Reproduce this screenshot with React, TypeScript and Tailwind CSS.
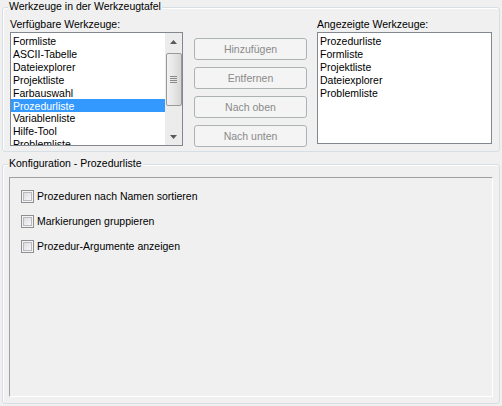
import React from 'react';

const available = [
  'Formliste',
  'ASCII-Tabelle',
  'Dateiexplorer',
  'Projektliste',
  'Farbauswahl',
  'Prozedurliste',
  'Variablenliste',
  'Hilfe-Tool',
  'Problemliste',
];

const shown = ['Prozedurliste', 'Formliste', 'Projektliste', 'Dateiexplorer', 'Problemliste'];

const buttons = ['Hinzufügen', 'Entfernen', 'Nach oben', 'Nach unten'];

const options = [
  'Prozeduren nach Namen sortieren',
  'Markierungen gruppieren',
  'Prozedur-Argumente anzeigen',
];

/** Win7 style vertical scrollbar, drawn at its fixed look. */
function ScrollBar() {
  return (
    <div className="flex w-[17px] shrink-0 flex-col items-center bg-[#ececec]">
      <div className="flex h-[17px] w-full items-center justify-center">
        <svg width="7" height="4" viewBox="0 0 7 4">
          <path d="M0 4 L3.5 0 L7 4 Z" fill="#5a5a5a" />
        </svg>
      </div>
      <div className="mt-[3px] flex h-[53px] w-[16px] items-center justify-center rounded-[2px] border border-[#9a9a9a] bg-gradient-to-r from-[#f2f2f2] via-[#e6e6e6] to-[#d6d6d6]">
        <div className="flex flex-col gap-[1px]">
          <div className="h-[1px] w-[7px] bg-[#8a8a8a]" />
          <div className="h-[1px] w-[7px] bg-[#8a8a8a]" />
          <div className="h-[1px] w-[7px] bg-[#8a8a8a]" />
          <div className="h-[1px] w-[7px] bg-[#8a8a8a]" />
        </div>
      </div>
      <div className="flex-1" />
      <div className="flex h-[17px] w-full items-center justify-center">
        <svg width="7" height="4" viewBox="0 0 7 4">
          <path d="M0 0 L3.5 4 L7 0 Z" fill="#5a5a5a" />
        </svg>
      </div>
    </div>
  );
}

function CheckBox({ label }: { label: string }) {
  return (
    <div className="flex h-[13px] items-center gap-[3px]">
      <div className="h-[13px] w-[13px] border border-[#8f8f8f] bg-[#f4f4f4] p-[1px]">
        <div className="h-full w-full border border-[#b6bac0] bg-gradient-to-br from-[#dcdcdc] to-[#f8f8f8]" />
      </div>
      <span className="leading-[13px]">{label}</span>
    </div>
  );
}

export default function App() {
  return (
    <div
      className="h-[406px] w-[502px] overflow-hidden bg-[#f0f0f0] text-[10.5px] leading-[13px] text-black"
      style={{ fontFamily: '"Liberation Sans", Arial, sans-serif' }}
    >
      {/* Werkzeuge group */}
      <div className="ml-[2px] mt-[7px] h-[145px] w-[498px] rounded-[3px] border border-[#d5dfe5] shadow-[inset_1px_1px_0_#ffffff]">
        <div className="-mt-[8px] ml-[5px] w-fit bg-[#f0f0f0] px-[1px] leading-[13px]">
          Werkzeuge in der Werkzeugtafel
        </div>
        <div className="flex pl-[7px]">
          {/* available */}
          <div className="flex flex-col">
            <div className="mt-[5px] h-[13px]">Verfügbare Werkzeuge:</div>
            <div className="mt-[1px] flex h-[114px] w-[173px] border border-[#828790] bg-white">
              <div className="flex-1 overflow-hidden pt-[2px]">
                {available.map((t) => (
                  <div
                    key={t}
                    className={
                      t === 'Prozedurliste'
                        ? '-mt-[1px] h-[13px] whitespace-nowrap bg-[#3399ff] pl-[2px] pt-[1px] text-white'
                        : 'h-[13px] whitespace-nowrap pl-[2px]'
                    }
                  >
                    {t}
                  </div>
                ))}
              </div>
              <ScrollBar />
            </div>
          </div>

          {/* buttons */}
          <div className="ml-[11px] mt-[25px] flex flex-col gap-[7px]">
            {buttons.map((b) => (
              <div
                key={b}
                className="flex h-[22px] w-[113px] items-center justify-center rounded-[3px] border border-[#adb2b5] bg-[#f4f4f4] text-[#8a8a8a]"
              >
                {b}
              </div>
            ))}
          </div>

          {/* shown */}
          <div className="ml-[10px] flex flex-col">
            <div className="mt-[5px] h-[13px]">Angezeigte Werkzeuge:</div>
            <div className="mt-[1px] h-[112px] w-[175px] border border-[#828790] bg-white pt-[2px]">
              {shown.map((t) => (
                <div key={t} className="h-[13px] whitespace-nowrap pl-[2px]">
                  {t}
                </div>
              ))}
            </div>
          </div>
        </div>
      </div>

      {/* Konfiguration group */}
      <div className="ml-[2px] mt-[12px] h-[240px] w-[498px] rounded-[3px] border border-[#d5dfe5] shadow-[inset_1px_1px_0_#ffffff]">
        <div className="-mt-[8px] ml-[5px] w-fit bg-[#f0f0f0] px-[1px] leading-[13px]">
          Konfiguration - Prozedurliste
        </div>
        <div className="ml-[6px] mt-[7px] flex h-[220px] w-[484px] flex-col gap-[12px] border border-b-white border-l-[#a0a0a0] border-r-white border-t-[#a0a0a0] pl-[11px] pt-[12px]">
          {options.map((o) => (
            <CheckBox key={o} label={o} />
          ))}
        </div>
      </div>
    </div>
  );
}
